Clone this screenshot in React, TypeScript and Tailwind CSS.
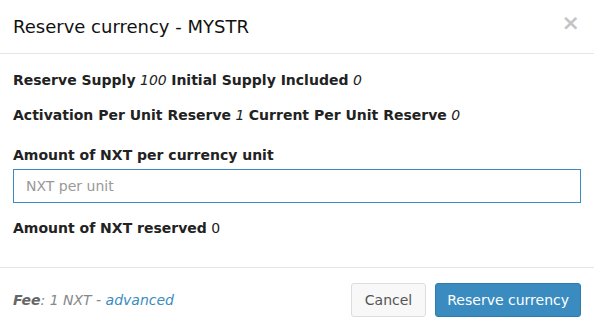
import React from 'react';

export default function App() {
  return (
    <div className="w-[594px] h-[330px] bg-white text-[#222] overflow-hidden" style={{ fontFamily: '"DejaVu Sans", sans-serif' }}>
      <div className="h-[54px] flex items-center justify-between pl-[13px] pr-[14px] border-b border-[#e5e5e5]">
        <h4 className="text-[18px] leading-none font-normal text-[#111] pt-[1px]">Reserve currency - MYSTR</h4>
        <span className="text-[22px] leading-none text-[#c4c4c4] font-bold -mt-[8px]">×</span>
      </div>
      <div className="px-[13px] pt-[17px] text-[14px]">
        <div className="h-[18px] leading-[18px]">
          <b>Reserve Supply</b> <i>100</i> <b>Initial Supply Included</b> <i>0</i>
        </div>
        <div className="h-[18px] leading-[18px] mt-[17px]">
          <b>Activation Per Unit Reserve</b> <i>1</i> <b>Current Per Unit Reserve</b> <i>0</i>
        </div>
        <div className="h-[18px] leading-[18px] mt-[22px] font-bold">Amount of NXT per currency unit</div>
        <input
          className="mt-[5px] w-full h-[34px] border border-[#3a8cc0] px-[12px] text-[14px] outline-none placeholder:text-[#999]"
          placeholder="NXT per unit"
        />
        <div className="h-[18px] leading-[18px] mt-[16px]">
          <b>Amount of NXT reserved</b> 0
        </div>
      </div>
      <div className="mt-[30px] border-t border-[#e5e5e5] h-[63px] flex items-start justify-between pt-[15px] pl-[13px] pr-[13px]">
        <div className="text-[14px] leading-[34px] italic text-[#888]">
          <b className="font-bold text-[#666]">Fee</b>: 1 NXT - <span className="text-[#3a8cc0]">advanced</span>
        </div>
        <div className="flex gap-[9px]">
          <button className="h-[34px] px-[13px] rounded-[3px] border border-[#ddd] bg-[#f8f8f8] text-[14px] text-[#555]">Cancel</button>
          <button className="h-[34px] px-[11px] rounded-[3px] border border-[#2e7bab] bg-[#3a8cc0] text-[14px] text-white">Reserve currency</button>
        </div>
      </div>
    </div>
  );
}
